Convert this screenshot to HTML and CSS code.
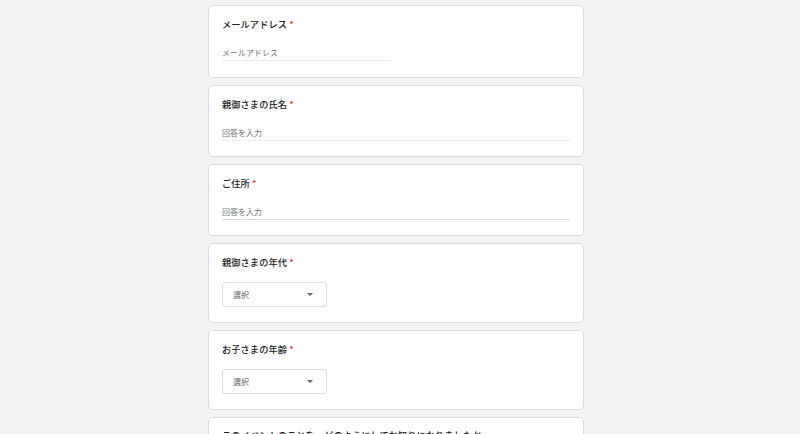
FILE: index.html
```html
<!DOCTYPE html>
<html lang="ja">
<head>
<meta charset="utf-8">
<title>フォーム</title>
<link rel="stylesheet" href="styles.css">
</head>
<body>
<div class="page">
  <main class="form">
    <section class="card">
      <div class="q-title">メールアドレス <span class="req">*</span></div>
      <div class="text-input short faint">メールアドレス</div>
    </section>
    <section class="card">
      <div class="q-title">親御さまの氏名 <span class="req">*</span></div>
      <div class="text-input faint">回答を入力</div>
    </section>
    <section class="card">
      <div class="q-title">ご住所 <span class="req">*</span></div>
      <div class="text-input">回答を入力</div>
    </section>
    <section class="card card-select">
      <div class="q-title">親御さまの年代 <span class="req">*</span></div>
      <div class="select"><span>選択</span><span class="caret"></span></div>
    </section>
    <section class="card card-select">
      <div class="q-title">お子さまの年齢 <span class="req">*</span></div>
      <div class="select"><span>選択</span><span class="caret"></span></div>
    </section>
    <section class="card card-last">
      <div class="q-title">このイベントのことを、どのようにしてお知りになりましたか</div>
    </section>
  </main>
</div>
</body>
</html>
```
FILE: styles.css
```css
html, body {
  margin: 0;
  padding: 0;
  background: #f4f3f1;
  height: 100%;
  overflow: hidden;
}
body {
  font-family: "Noto Sans CJK JP", "Noto Sans", sans-serif;
  color: #202124;
}
.page {
  padding: 5px 8px 0 0;
}
.form {
  width: 376px;
  margin: 0 auto;
  display: flex;
  flex-direction: column;
  gap: 7px;
}
.card {
  box-sizing: border-box;
  background: #fff;
  border: 1px solid #dcdbdb;
  border-radius: 5px;
  padding: 11px 13px 15px;
  height: 72px;
  flex-shrink: 0;
  display: flex;
  flex-direction: column;
}
.card:first-child {
  height: 73px;
}
.card-select {
  height: 80px;
}
.card-last {
  padding-top: 10px;
}
.q-title {
  font-size: 9.2px;
  line-height: 14px;
  letter-spacing: 0.1px;
  font-weight: 500;
  color: #202124;
}
.req {
  color: #d93025;
}
.text-input {
  margin-top: 14px;
  height: 15px;
  font-size: 8px;
  line-height: 15px;
  color: #70757a;
  border-bottom: 1px solid #dadce0;
}
.text-input.faint {
  border-bottom-color: #ececec;
}
.text-input.short {
  width: 168px;
}
.select {
  margin-top: 13px;
  box-sizing: border-box;
  width: 105px;
  height: 27px;
  border: 1px solid #dadce0;
  border-radius: 3px;
  padding: 0 10px;
  display: flex;
  align-items: center;
  justify-content: space-between;
  font-size: 8px;
  color: #5f6368;
}
.caret {
  width: 0;
  height: 0;
  border-left: 3.5px solid transparent;
  border-right: 3.5px solid transparent;
  border-top: 3.5px solid #5f6368;
  margin-right: 3px;
}
```
